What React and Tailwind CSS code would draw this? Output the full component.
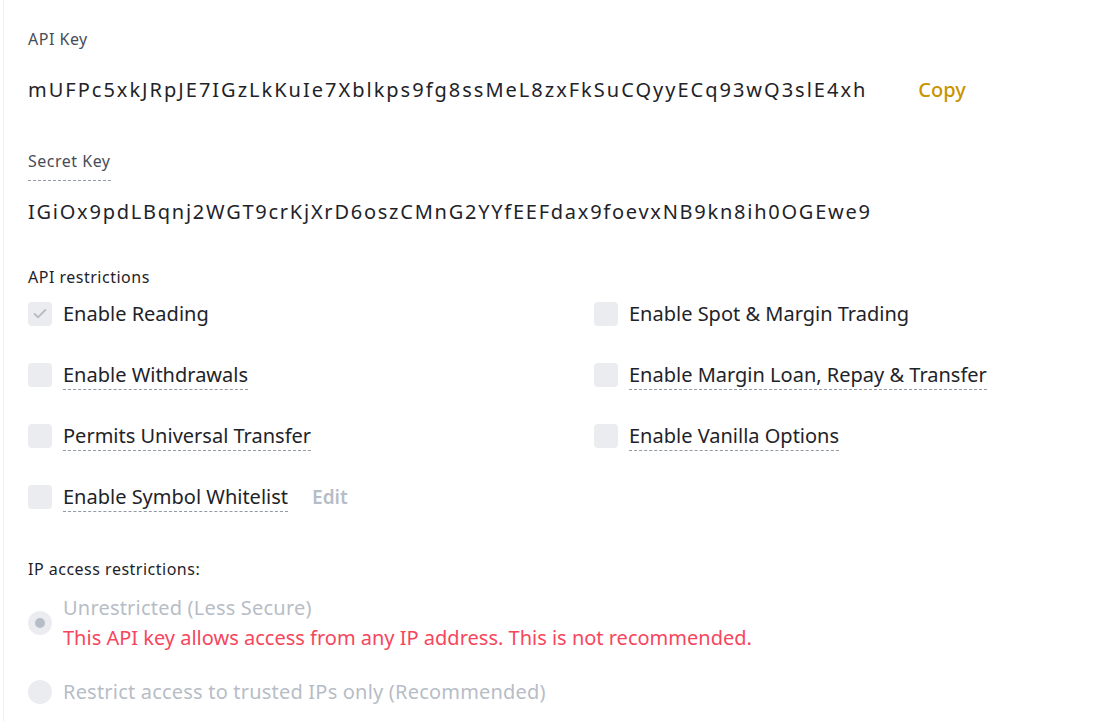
import { Check } from "lucide-react";

const font = { fontFamily: '"Noto Sans", "Open Sans", sans-serif' };

function Checkbox({ checked }) {
  return (
    <span className="flex h-6 w-6 shrink-0 items-center justify-center rounded bg-[#eaecef]">
      {checked && <Check className="h-4 w-4 text-[#b7bdc6]" strokeWidth={3} />}
    </span>
  );
}

function Option({ label, checked, dashed, extra }) {
  return (
    <div className="flex h-[54px] items-center">
      <Checkbox checked={checked} />
      <span
        className={
          "ml-[11px] text-[20px] leading-7 text-[#1e2329]" +
          (dashed ? " border-b border-dashed border-[#929aa5]" : "")
        }
      >
        {label}
      </span>
      {extra && <span className="ml-6 text-[19px] font-semibold text-[#b7bdc6]">{extra}</span>}
    </div>
  );
}

export default function App() {
  return (
    <div className="min-h-[721px] bg-white" style={font}>
      <div className="ml-[3px] min-h-[721px] border-l border-[#eef0f2] pl-6 pt-[29px]">
        <p className="text-[16px] leading-5 tracking-[0.5px] text-[#474d57]">API Key</p>
        <div className="mt-[26px] flex items-center">
          <span className="text-[20px] leading-7 tracking-[2px] text-[#1e2329]">
            mUFPc5xkJRpJE7IGzLkKuIe7Xblkps9fg8ssMeL8zxFkSuCQyyECq93wQ3slE4xh
          </span>
          <button className="ml-[51px] text-[20px] font-medium text-[#c99400]">Copy</button>
        </div>

        <p className="mt-[46px] inline-block border-b border-dashed border-[#929aa5] pb-[9px] text-[16px] leading-5 tracking-[0.5px] text-[#474d57]">
          Secret Key
        </p>
        <div className="mt-[17px] text-[20px] leading-7 tracking-[1.75px] text-[#1e2329]">
          IGiOx9pdLBqnj2WGT9crKjXrD6oszCMnG2YYfEEFdax9foevxNB9kn8ih0OGEwe9
        </div>

        <p className="mt-[41px] text-[16px] leading-5 tracking-[0.5px] text-[#1e2329]">API restrictions</p>
        <div className="grid w-[1000px] grid-cols-[566px_1fr] gap-y-[7px]">
          <Option label="Enable Reading" checked />
          <Option label="Enable Spot & Margin Trading" />
          <Option label="Enable Withdrawals" dashed />
          <Option label="Enable Margin Loan, Repay & Transfer" dashed />
          <Option label="Permits Universal Transfer" dashed />
          <Option label="Enable Vanilla Options" dashed />
          <Option label="Enable Symbol Whitelist" dashed extra="Edit" />
        </div>

        <p className="mt-[35px] text-[16px] leading-5 tracking-[0.5px] text-[#1e2329]">IP access restrictions:</p>
        <div className="mt-[14px] flex items-center">
          <span className="flex h-6 w-6 shrink-0 items-center justify-center rounded-full bg-[#eaecef]">
            <span className="h-[10px] w-[10px] rounded-full bg-[#b7bdc6]" />
          </span>
          <div className="ml-[11px]">
            <p className="text-[20px] leading-[30px] tracking-[0.2px] text-[#b7bdc6]">Unrestricted (Less Secure)</p>
            <p className="text-[20px] leading-[30px] text-[#f6465d]">
              This API key allows access from any IP address. This is not recommended.
            </p>
          </div>
        </div>
        <div className="mt-[24px] flex items-center">
          <span className="h-6 w-6 shrink-0 rounded-full bg-[#eaecef]" />
          <p className="ml-[11px] text-[20px] leading-[30px] tracking-[0.2px] text-[#b7bdc6]">
            Restrict access to trusted IPs only (Recommended)
          </p>
        </div>
      </div>
    </div>
  );
}
